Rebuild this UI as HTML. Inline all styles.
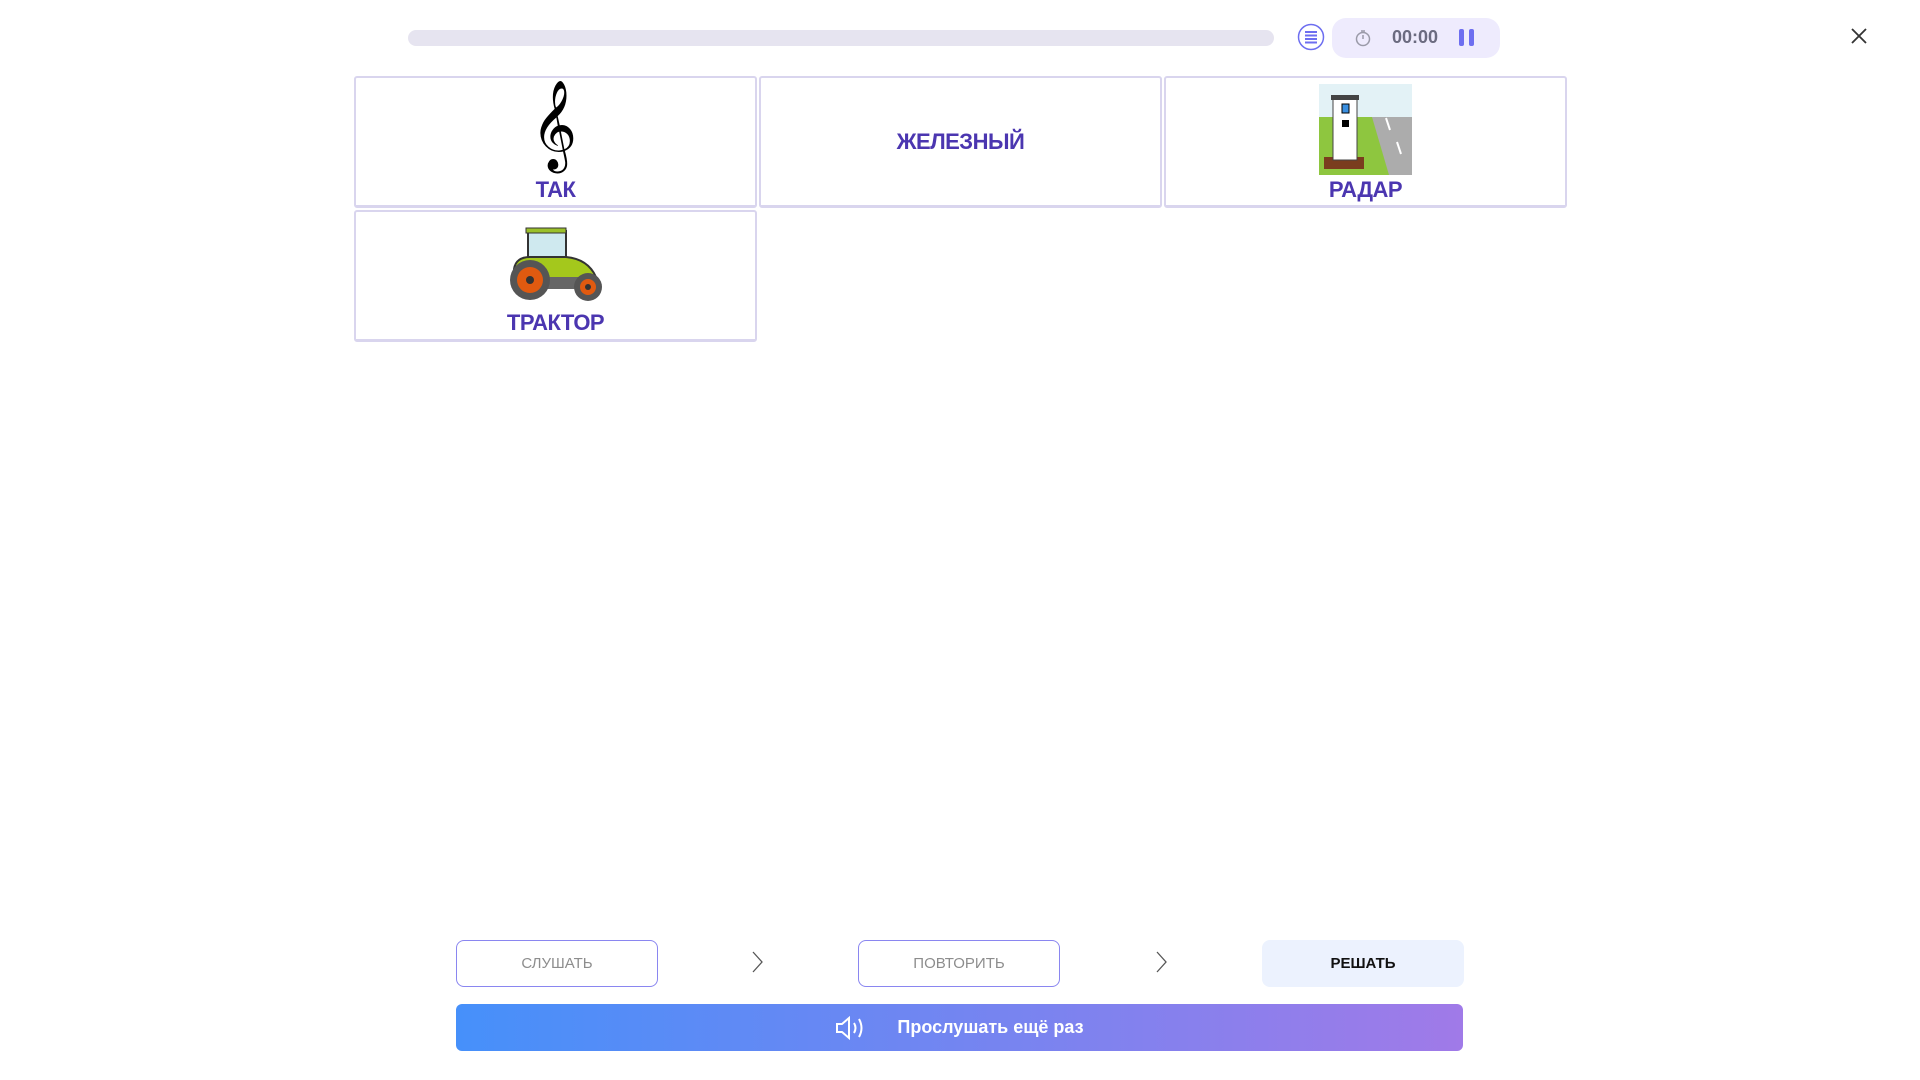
<!DOCTYPE html>
<html><head><meta charset="utf-8"><style>
*{margin:0;padding:0;box-sizing:border-box}
body{width:1920px;height:1080px;background:#fff;position:relative;font-family:"Liberation Sans",sans-serif;overflow:hidden}
.abs{position:absolute}
.card{position:absolute;width:403px;height:132px;border:2px solid #d9d5ee;border-bottom-width:3px;border-radius:3px;background:#fff}
.lbl{position:absolute;left:0;right:0;text-align:center;color:#4b36b0;font-weight:bold;font-size:22px;letter-spacing:-0.5px}
.btn{position:absolute;top:940px;width:202px;height:47px;border-radius:8px;display:flex;align-items:center;justify-content:center;font-size:15px}
.ob{border:1.5px solid #8a86f0;color:#8d8d8d}
</style></head><body>
<div class="abs" style="left:408px;top:30px;width:866px;height:16px;border-radius:8px;background:#e6e4f0"></div>
<svg class="abs" style="left:1297px;top:23px" width="28" height="28" viewBox="0 0 28 28"><circle cx="14" cy="14" r="12.5" fill="#fff" stroke="#6d6ef0" stroke-width="1.5"/><g stroke="#6d6ef0" stroke-width="2"><line x1="8" y1="9" x2="20" y2="9"/><line x1="8" y1="12.5" x2="20" y2="12.5"/><line x1="8" y1="16" x2="20" y2="16"/><line x1="8" y1="19.5" x2="20" y2="19.5"/></g></svg>
<div class="abs" style="left:1332px;top:18px;width:168px;height:40px;border-radius:14px;background:#eeebfd"></div>
<svg class="abs" style="left:1353px;top:28px" width="20" height="20" viewBox="0 0 20 20"><circle cx="10" cy="11" r="6.5" fill="none" stroke="#9a9aa8" stroke-width="1.5"/><line x1="10" y1="11" x2="10" y2="7" stroke="#9a9aa8" stroke-width="1.5"/><line x1="8" y1="3" x2="12" y2="3" stroke="#9a9aa8" stroke-width="1.5"/></svg>
<div class="abs" style="left:1392px;top:27px;font-size:18px;color:#6b6b80;font-weight:bold">00:00</div>
<div class="abs" style="left:1459px;top:29px;width:5px;height:17px;background:#6d6ef0;border-radius:2px"></div>
<div class="abs" style="left:1469px;top:29px;width:5px;height:17px;background:#6d6ef0;border-radius:2px"></div>
<svg class="abs" style="left:1850px;top:27px" width="18" height="18"><path d="M2 2L16 16M16 2L2 16" stroke="#333" stroke-width="1.8"/></svg>

<div class="card" style="left:354px;top:76px">
<div class="abs" style="left:175px;top:2px;font-size:78px;line-height:90px;color:#000;font-family:'DejaVu Sans',sans-serif">𝄞</div>
<div class="lbl" style="top:99px">ТАК</div></div>
<div class="card" style="left:759px;top:76px"><div class="lbl" style="top:51px">ЖЕЛЕЗНЫЙ</div></div>
<div class="card" style="left:1164px;top:76px">
<svg class="abs" style="left:153px;top:6px" width="93" height="91" viewBox="0 0 93 91"><rect width="93" height="91" fill="#e3f2f6"/><rect y="33" width="93" height="58" fill="#8ec63f"/><polygon points="53,33 93,33 93,91 70,91" fill="#acacac"/><line x1="67" y1="34" x2="71" y2="46" stroke="#fff" stroke-width="2"/><line x1="78" y1="58" x2="82" y2="70" stroke="#fff" stroke-width="2"/><rect x="5" y="73" width="40" height="12" fill="#7a3d1e"/><rect x="14" y="14" width="24" height="62" fill="#fff" stroke="#444"/><rect x="12" y="11" width="28" height="5" fill="#444"/><rect x="23" y="20" width="7" height="9" fill="#3a8fe0" stroke="#000"/><rect x="23" y="36" width="7" height="7" fill="#000"/></svg>
<div class="lbl" style="top:99px">РАДАР</div></div>
<div class="card" style="left:354px;top:210px">
<svg class="abs" style="left:152px;top:15px" width="96" height="75" viewBox="0 0 96 75"><rect x="20" y="4" width="38" height="36" fill="#cfe9ef" stroke="#333" stroke-width="2"/><rect x="18" y="1" width="40" height="5" fill="#9bc02a" stroke="#333"/><path d="M6 42 Q8 30 22 30 L58 30 Q80 32 88 50 L88 56 L6 56Z" fill="#a4c81c" stroke="#333" stroke-width="2"/><rect x="24" y="50" width="48" height="12" fill="#666"/><circle cx="22" cy="53" r="20" fill="#555"/><circle cx="22" cy="53" r="13" fill="#e05a10"/><circle cx="22" cy="53" r="4" fill="#333"/><circle cx="80" cy="60" r="14" fill="#555"/><circle cx="80" cy="60" r="8" fill="#e05a10"/><circle cx="80" cy="60" r="3" fill="#333"/></svg>
<div class="lbl" style="top:98px">ТРАКТОР</div></div>

<div class="btn ob" style="left:456px">СЛУШАТЬ</div>
<svg class="abs" style="left:751px;top:951px" width="14" height="22"><path d="M2 1L11 11L2 21" fill="none" stroke="#555" stroke-width="1.3"/></svg>
<div class="btn ob" style="left:858px">ПОВТОРИТЬ</div>
<svg class="abs" style="left:1155px;top:951px" width="14" height="22"><path d="M2 1L11 11L2 21" fill="none" stroke="#555" stroke-width="1.3"/></svg>
<div class="btn" style="left:1262px;background:#ecf2fe;color:#111;font-weight:bold">РЕШАТЬ</div>
<div class="abs" style="left:456px;top:1004px;width:1007px;height:47px;border-radius:6px;background:linear-gradient(90deg,#4690fa,#a07ae8);display:flex;align-items:center;justify-content:center;color:#fff;font-weight:bold;font-size:18px">
<svg width="32" height="26" viewBox="0 0 32 26" style="margin-right:30px"><path d="M2 9H7L14 3V23L7 17H2Z" fill="none" stroke="#fff" stroke-width="2"/><path d="M19 8Q22 13 19 18M24 4Q29 13 24 22" fill="none" stroke="#fff" stroke-width="2"/></svg>Прослушать ещё раз</div>
</body></html>
